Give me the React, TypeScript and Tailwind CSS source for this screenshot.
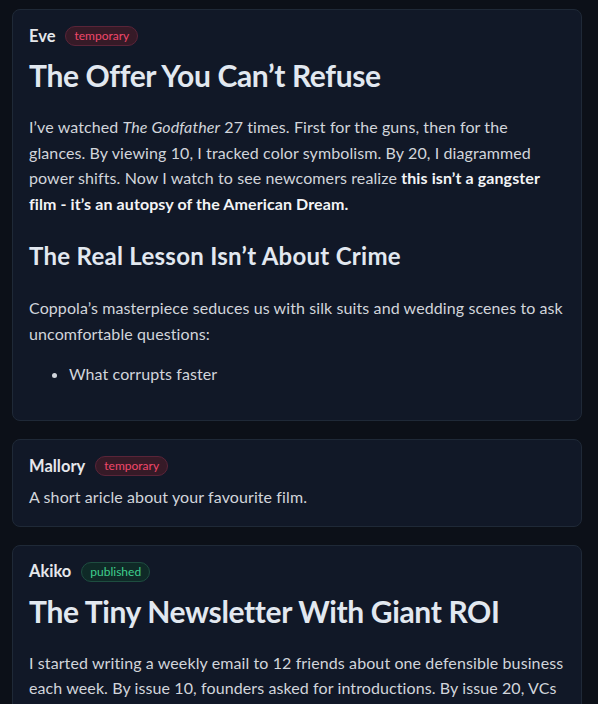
const font = { fontFamily: "Lato, 'Noto Sans', sans-serif" };

function Badge({ status }: { status: "temporary" | "published" }) {
  const tone =
    status === "published"
      ? "bg-[#0f2a27] border-[#1e4d40] text-[#3fcf8e]"
      : "bg-[#361a27] border-[#5a2438] text-[#f0476a]";
  return (
    <span className={`inline-flex h-[20px] items-center rounded-full border px-2 text-[12px] leading-none ${tone}`}>
      {status}
    </span>
  );
}

function Author({ name, status }: { name: string; status: "temporary" | "published" }) {
  return (
    <div className="flex h-[20px] items-center gap-[10px]">
      <span className="text-[16.5px] font-bold text-[#e5e7eb]">{name}</span>
      <Badge status={status} />
    </div>
  );
}

const para = "text-[16px] leading-[25.6px] tracking-[0.1px] text-[#d1d5db]";

export default function App() {
  return (
    <div style={font} className="min-h-screen bg-[#0c1018] pl-3 pr-4 pt-[9px] pb-6">
      <div className="flex flex-col gap-[18px]">
        <article className="rounded-lg border border-[#1f2937] bg-[#111827] px-4 pt-4 pb-4">
          <Author name="Eve" status="temporary" />
          <h1 className="mt-[11px] text-[30px] font-bold leading-[36px] tracking-[-0.35px] text-[#e2e8f0]">
            The Offer You Can’t Refuse
          </h1>
          <p className={`mt-[21px] ${para}`}>
            I’ve watched <em>The Godfather</em> 27 times. First for the guns, then for the glances. By viewing 10, I
            tracked color symbolism. By 20, I diagrammed power shifts. Now I watch to see newcomers realize{" "}
            <strong className="font-bold text-[#f3f4f6]">
              this isn’t a gangster film - it’s an autopsy of the American Dream.
            </strong>
          </p>
          <h2 className="mt-[24px] text-[24px] font-bold leading-[32px] tracking-[0.28px] text-[#e2e8f0]">
            The Real Lesson Isn’t About Crime
          </h2>
          <p className={`mt-[23px] ${para}`}>
            Coppola’s masterpiece seduces us with silk suits and wedding scenes to ask uncomfortable questions:
          </p>
          <ul className={`mt-[14px] mb-[18px] list-disc pl-10 marker:text-[#d1d5db] ${para}`}>
            <li>What corrupts faster</li>
          </ul>
        </article>

        <article className="rounded-lg border border-[#1f2937] bg-[#111827] p-4">
          <Author name="Mallory" status="temporary" />
          <p className={`mt-2 ${para}`}>A short aricle about your favourite film.</p>
        </article>

        <article className="rounded-lg border border-[#1f2937] bg-[#111827] p-4">
          <Author name="Akiko" status="published" />
          <h1 className="mt-[11px] text-[30px] font-bold leading-[36px] tracking-[-0.35px] text-[#e2e8f0]">
            The Tiny Newsletter With Giant ROI
          </h1>
          <p className={`mt-[21px] ${para}`}>
            I started writing a weekly email to 12 friends about one defensible business each week. By issue 10,
            founders asked for introductions. By issue 20, VCs were paying to sponsor it.
          </p>
        </article>
      </div>
    </div>
  );
}
